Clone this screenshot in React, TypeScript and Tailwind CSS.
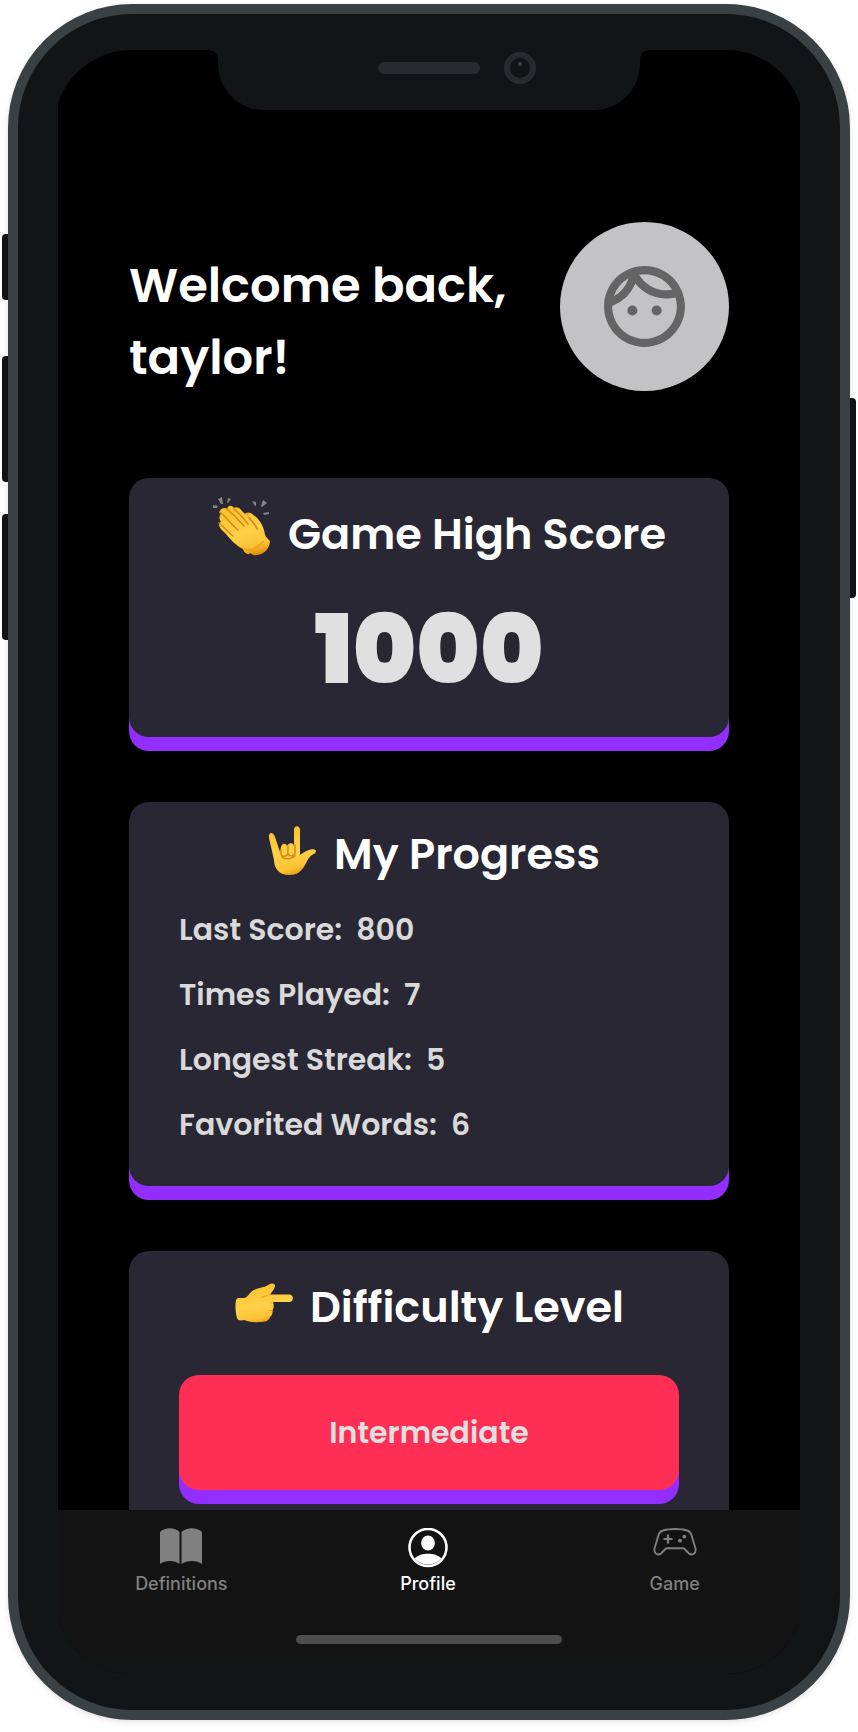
import type { ReactNode } from "react";
import { MdOutlineFace } from "react-icons/md";

const stats = [
  { label: "Last Score:", value: 800 },
  { label: "Times Played:", value: 7 },
  { label: "Longest Streak:", value: 5 },
  { label: "Favorited Words:", value: 6 },
];

function SkinGradient({ id }: { id: string }) {
  return (
    <defs>
      <linearGradient id={id} x1="0.3" y1="0" x2="0.6" y2="1">
        <stop offset="0" stopColor="#fbc02c" />
        <stop offset="0.55" stopColor="#ffd04a" />
        <stop offset="0.85" stopColor="#fbc233" />
        <stop offset="1" stopColor="#e5950f" />
      </linearGradient>
    </defs>
  );
}

function ClapEmoji() {
  return (
    <svg viewBox="0 2 60 60" className="mb-3 size-[60px] shrink-0 overflow-visible" aria-hidden="true">
      <SkinGradient id="clap" />
      <g fill="#858585">
        <path d="M1 9l5 1-1 2-4 0zM6 3l4-2 1 7-2 0zM16 2l3 1-3 4-1 0zM40 5l4 1 0 4-1 0zM51 4l4 3-5 4-1-1zM51 17l6-1 0 2-5 1z" />
      </g>
      <path d="M31 20c3-5 8-4 10-1l7 8c2 3 3 7 3 11l-14-3z" fill="#edaa22" />
      <path
        d="M8 15c1-3 5-4 7-2 1-4 5-4 7-1 3-2 6 0 8 3l7 7c-2-3 0-6 3-4 5 3 10 9 12 16 1 4 1 6 3 8l3 3c0 7-6 14-14 14-2 1-4-1-6-2-1 3-6 0-7-4-8-4-12-9-17-15-4-4-7-6-7-10 0-1 1-2 2-2-2-3-2-7 0-8-2-1-2-2-1-3z"
        fill="url(#clap)"
      />
      <path
        d="M8 16c6 5 11 12 18 18M7 27c5 4 9 9 14 13M15 13c6 5 11 10 17 17M22 13c6 5 9 8 14 15M37 22c4 4 7 7 8 11"
        fill="none"
        stroke="#d18b17"
        strokeWidth="1.6"
        strokeLinecap="round"
      />
      <path d="M31 52c4 3 9 3 14-1 3-2 4-3 7-6" fill="none" stroke="#e59b17" strokeWidth="2" opacity="0.6" />
    </svg>
  );
}

function LoveYouEmoji() {
  return (
    <svg viewBox="-6 -4 60 60" className="mb-3 size-[60px] shrink-0 overflow-visible" aria-hidden="true">
      <SkinGradient id="love" />
      <path
        d="M5 16c-1-6 4-7 6-1l5 15 1-5c1-4 5-4 6-1 2-4 7-3 7 0l0-16c0-5 6-5 6 0l0 25c3-2 5-4 9-5 2-1 7-1 7 1 0 2-2 3-4 4-4 3-4 5-7 10-4 7-8 10-16 10-9 0-15-6-15-15z"
        fill="url(#love)"
      />
      <path
        d="M17 28c-1 5 1 7 4 6 3 0 3-3 3-10M24 30c0 5 6 5 7 1l0-8M18 35c3 3 9 2 13-1"
        fill="none"
        stroke="#d18b17"
        strokeWidth="1.5"
        strokeLinecap="round"
      />
    </svg>
  );
}

function PointEmoji() {
  return (
    <svg viewBox="0 -4 60 60" className="mb-3 size-[60px] shrink-0 overflow-visible" aria-hidden="true">
      <SkinGradient id="point" />
      <path
        d="M2 25C3 22 7 23.500 10 23C14 22.500 15 18 19 15.500C24 12.500 30 13 35 9.500C38 7.500 41.500 8.500 41 11C40.500 14 38 17 36 19.500H55.500C60 19.500 60 27 55.500 27H39C40 30 40 33 38.500 35C39 38 38 41 36 42C35 46 31 47 26 47C19 48 14 46.500 10 45C7 46 3.500 45.500 3 43C1.500 38 1 30 2 25Z"
        fill="url(#point)"
      />
      <path
        d="M36 19.500C33 21 30 21.500 27 22.500M38 28H36M38 35.500H35M35.500 42H32"
        fill="none"
        stroke="#eba825"
        strokeWidth="1.2"
        strokeLinecap="round"
      />
    </svg>
  );
}

function BookIcon() {
  return (
    <svg viewBox="0 0 44 40" className="h-10 w-11" fill="currentColor" aria-hidden="true">
      <path d="M1 4C6-1 16-1 20.500 4V36C16 32 6 32 1 36Z" />
      <path d="M22.500 4C28-1 38-1 43 4V36C38 32 28 32 22.500 36Z" />
    </svg>
  );
}

function ProfileIcon() {
  return (
    <svg viewBox="0 0 40 40" className="size-10" aria-hidden="true">
      <circle cx="20" cy="19.500" r="18.500" fill="none" stroke="currentColor" strokeWidth="2.600" />
      <ellipse cx="20" cy="15" rx="6.900" ry="7.600" fill="currentColor" />
      <path d="M6.500 30.500C10 27 15 25.800 20 25.800S30 27 33.500 30.500A18.200 18.200 0 0 1 6.500 30.500Z" fill="currentColor" />
    </svg>
  );
}

function GameIcon() {
  return (
    <svg
      viewBox="0 0 44 40"
      className="h-10 w-11"
      fill="none"
      stroke="currentColor"
      strokeWidth="1.900"
      strokeLinejoin="round"
      aria-hidden="true"
    >
      <path d="M10 2.500C16 .5 28 .5 34 2.500C36 3 37.500 4.500 38.300 6.500L42.500 20.500C43.500 25.500 39 28 36 25.500L31.500 21C31 20.500 30.500 20.300 30 20.300H14C13.500 20.300 13 20.500 12.500 21L8 25.500C5 28 .5 25.500 1.500 20.500L5.700 6.500C6.500 4.500 8 3 10 2.500Z" />
      <path d="M15 6.500V15.500M10.500 11H19.500" strokeWidth="2.200" />
      <circle cx="27" cy="12.700" r="1.900" fill="currentColor" stroke="none" />
      <circle cx="31.300" cy="8.600" r="1.900" fill="currentColor" stroke="none" />
    </svg>
  );
}

function Card({ className, children }: { className: string; children: ReactNode }) {
  return (
    <section className={`rounded-[20px] bg-[#282733] px-[50px] shadow-[0_14px_0_#932eff] ${className}`}>
      {children}
    </section>
  );
}

function CardTitle({ icon, children }: { icon: ReactNode; children: ReactNode }) {
  return (
    <h2 className="flex items-center justify-center gap-4 text-[43px] leading-[60px] font-semibold whitespace-nowrap text-white">
      {icon}
      {children}
    </h2>
  );
}

function Tab({ icon, label, active }: { icon: ReactNode; label: string; active?: boolean }) {
  return (
    <a
      href="#"
      aria-current={active ? "page" : undefined}
      className={`flex flex-col items-center gap-1 text-lg leading-6 font-medium ${active ? "text-white" : "text-[#808080]"}`}
    >
      {icon}
      {label}
    </a>
  );
}

function Notch() {
  return (
    <div className="absolute top-9 left-1/2 h-[60px] w-[422px] -translate-x-1/2 rounded-b-[46px] bg-[#111516]">
      <div className="absolute top-0 -left-2 size-2 bg-[radial-gradient(circle_at_0_100%,#000_7px,#111516_8px)]" />
      <div className="absolute top-0 -right-2 size-2 bg-[radial-gradient(circle_at_100%_100%,#000_7px,#111516_8px)]" />
      <div className="ml-40 flex items-center gap-6 pt-[2px]">
        <div className="h-3 w-[102px] rounded-full bg-[#262b2d]" />
        <div className="flex size-8 justify-center rounded-full border-[6px] border-[#262b2d] pt-1">
          <div className="size-1 rounded-full bg-[#3b4245]" />
        </div>
      </div>
    </div>
  );
}

export default function App() {
  return (
    <main className="h-screen min-h-[900px] bg-white px-2 pt-1 pb-3 font-['Poppins','Inter',sans-serif]">
      <div className="relative h-full">
        <div className="absolute top-[230px] -left-1.5 h-[66px] w-1.5 rounded-l bg-[#111516]" />
        <div className="absolute top-[352px] -left-1.5 h-[126px] w-1.5 rounded-l bg-[#111516]" />
        <div className="absolute top-[510px] -left-1.5 h-[126px] w-1.5 rounded-l bg-[#111516]" />
        <div className="absolute top-[394px] -right-1.5 h-[200px] w-1.5 rounded-r bg-[#111516]" />

        <div className="relative h-full rounded-[124px] border-[10px] border-[#3a4145] bg-[#111516] p-9 shadow-[0_2px_6px_rgba(0,0,0,0.12)]">
          <div className="h-full overflow-hidden rounded-[78px] px-1">
            <div className="flex h-full flex-col bg-black">
              <div className="min-h-0 flex-1 overflow-y-auto px-[71px] pt-[172px] pb-16 [scrollbar-width:none]">
                <header className="mb-[84px] flex items-start justify-between">
                  <h1 className="mt-7 text-5xl leading-[72px] font-semibold text-white">
                    Welcome back,
                    <br />
                    taylor!
                  </h1>
                  <div className="flex size-[169px] shrink-0 items-center justify-center rounded-full bg-[#c3c2c4]">
                    <MdOutlineFace className="size-[97px] text-[#646464]" aria-label="Avatar" />
                  </div>
                </header>

                <div className="flex flex-col gap-[65px]">
                  <Card className="pt-5 pb-[27px]">
                    <div className="pl-5">
                      <CardTitle icon={<ClapEmoji />}>Game High Score</CardTitle>
                    </div>
                    <p className="mt-5 text-center text-8xl leading-[120px] font-black text-[#e0e0e0]">1000</p>
                  </Card>

                  <Card className="pt-4 pb-7">
                    <CardTitle icon={<LoveYouEmoji />}>My Progress</CardTitle>
                    <ul className="mt-2 text-[30px] leading-[64px] font-semibold text-[#d9d9da]">
                      {stats.map((stat) => (
                        <li key={stat.label} className="flex h-[65px] gap-[14px]">
                          <span>{stat.label}</span>
                          <span>{stat.value}</span>
                        </li>
                      ))}
                    </ul>
                  </Card>

                  <Card className="pt-5 pb-16">
                    <CardTitle icon={<PointEmoji />}>Difficulty Level</CardTitle>
                    <button
                      type="button"
                      className="mt-8 h-[115px] w-full rounded-[20px] bg-[#ff2e54] text-[30px] font-semibold text-[#e0e0e0] shadow-[0_14px_0_#932eff]"
                    >
                      Intermediate
                    </button>
                  </Card>
                </div>
              </div>

              <nav className="h-[164px] shrink-0 bg-[linear-gradient(#131313_144px,#111516_156px)] pt-[18px] font-['Inter',sans-serif]">
                <div className="grid grid-cols-3 pr-0.5">
                  <Tab icon={<BookIcon />} label="Definitions" />
                  <Tab icon={<ProfileIcon />} label="Profile" active />
                  <Tab icon={<GameIcon />} label="Game" />
                </div>
                <div className="mx-auto mt-[39px] h-[9px] w-[266px] rounded-full bg-[#4d4d4d]" />
              </nav>
            </div>
          </div>
          <Notch />
        </div>
      </div>
    </main>
  );
}
